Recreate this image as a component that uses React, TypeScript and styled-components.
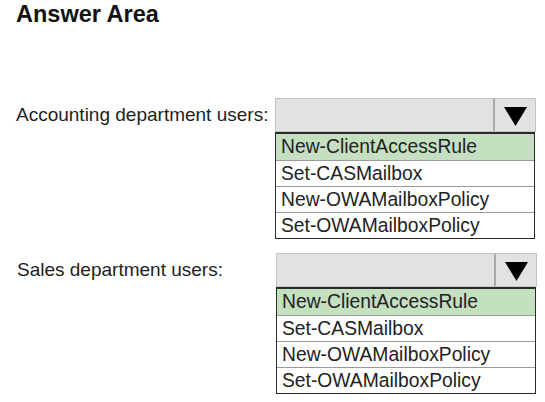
import React, { FC } from 'react';
import styled, { createGlobalStyle } from 'styled-components';

const GlobalStyle = createGlobalStyle`
    body {
        margin: 0;
        background: #ffffff;
        font-family: "Liberation Sans", Arial, sans-serif;
        color: #1e1e1e;
    }
`;

interface Question {
    label: string
    options: string[]
    selected: number
}

const OPTIONS = ['New-ClientAccessRule', 'Set-CASMailbox', 'New-OWAMailboxPolicy', 'Set-OWAMailboxPolicy'];

const QUESTIONS: Question[] = [
    { label: 'Accounting department users:', options: OPTIONS, selected: 0 },
    { label: 'Sales department users:', options: OPTIONS, selected: 0 },
];

const Dropdown: FC<{ options: string[], selected: number }> = ({ options, selected }) => (
    <>
        <SelectBar>
            <SelectValue />
            <ArrowCell>
                <svg width="23" height="19" viewBox="0 0 23 19">
                    <polygon points="0,0 23,0 11.5,19" fill="#000" />
                </svg>
            </ArrowCell>
        </SelectBar>
        <OptionList>
            {options.map((opt, i) => (
                <OptionRow key={opt} active={i === selected}>{opt}</OptionRow>
            ))}
        </OptionList>
    </>
);

const App: FC = () => {
    return (
        <Page>
            <GlobalStyle />
            <Title>Answer Area</Title>
            <Questions>
                {QUESTIONS.map((q, i) => (
                    <Field key={q.label} indent={i === 0 ? 0 : 1}>
                        <Label>{q.label}</Label>
                        <Dropdown options={q.options} selected={q.selected} />
                    </Field>
                ))}
            </Questions>
        </Page>
    )
}

const Page = styled.div`
    width: 545px;
    height: 402px;
    padding: 1px 0 0 16px;
    box-sizing: border-box;
`;

const Title = styled.div`
    font-weight: 700;
    font-size: 23.5px;
    line-height: 27px;
    color: #111;
`;

const Questions = styled.div`
    display: flex;
    flex-direction: column;
    gap: 14px;
    margin-top: 70px;
`;

const Field = styled.div<{ indent: number }>`
    display: grid;
    grid-template-columns: 259px 261px;
    padding-left: ${p => p.indent}px;
`;

const Label = styled.div`
    align-self: center;
    font-size: 19px;
    line-height: 22px;
    color: #1e1e1e;
`;

const SelectBar = styled.div`
    display: flex;
    height: 34px;
    box-sizing: border-box;
    border: 1px solid #c4c4c4;
    background: #e2e2e2;
`;

const SelectValue = styled.div`
    flex: 1;
`;

const ArrowCell = styled.div`
    width: 40px;
    display: flex;
    align-items: center;
    justify-content: center;
    border-left: 2px solid #a9a9a9;
    padding-top: 2px;
`;

const OptionList = styled.div`
    grid-column: 2;
    width: 260px;
    box-sizing: border-box;
    border: 1px solid #2a2a2a;
    border-top-width: 2px;
    background: #fff;
`;

const OptionRow = styled.div<{ active: boolean }>`
    height: 26px;
    box-sizing: border-box;
    padding: 2px 0 0 5px;
    font-size: 19.3px;
    line-height: 22px;
    color: #222;
    background: ${p => (p.active ? '#c5dfc1' : '#ffffff')};
    border-top: 1px solid #9a9a9a;

    &:first-child {
        border-top: none;
    }
`;

export default App;
